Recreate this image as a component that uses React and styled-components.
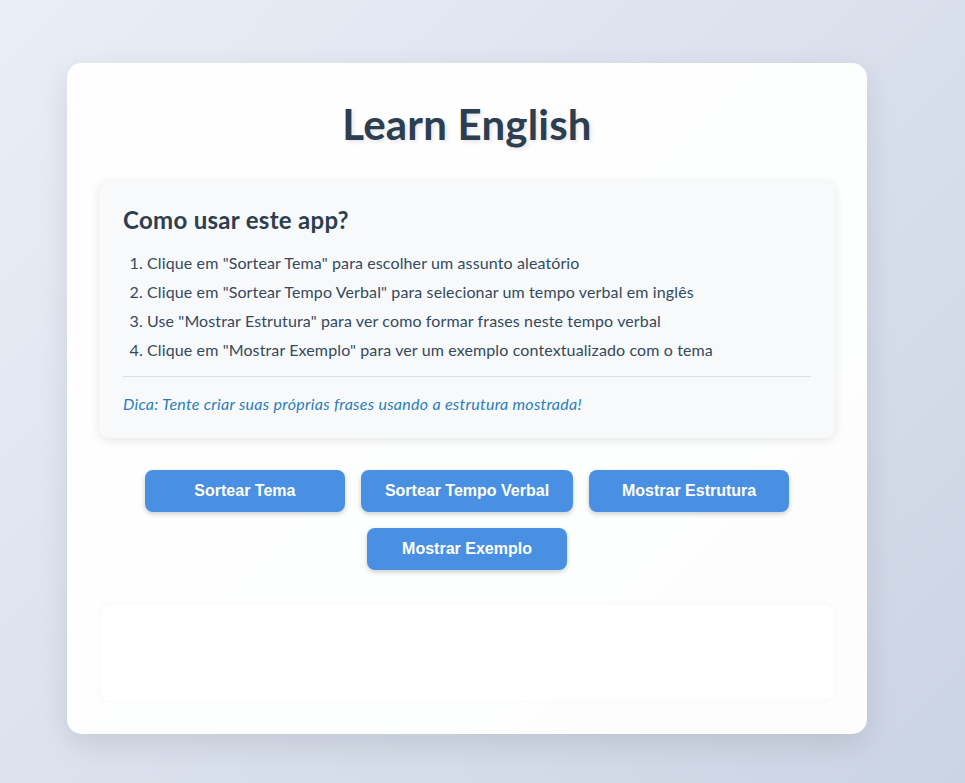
import React from 'react';
import styled, { createGlobalStyle } from 'styled-components';

const GlobalStyle = createGlobalStyle`
	html, body {
		margin: 0;
		padding: 0;
	}

	body {
		min-height: 100vh;
		background: linear-gradient(135deg, #eaeef6 0%, #cbd4e4 100%);
		font-family: "Segoe UI", Lato, "Noto Sans", sans-serif;
		color: #2c3e50;
	}
`;

const Page = styled.main`
	min-height: 100vh;
	box-sizing: border-box;
	padding: 63px 0 40px 67px;
`;

const Card = styled.section`
	width: 800px;
	box-sizing: border-box;
	padding: 32px;
	background: rgba(255, 255, 255, 0.95);
	border-radius: 15px;
	box-shadow: 0 10px 30px rgba(0, 0, 0, 0.1);
`;

const Title = styled.h1`
	margin: 0 0 32px;
	padding-top: 4px;
	text-align: center;
	font-size: 42px;
	line-height: 50px;
	font-weight: 700;
	letter-spacing: 0.2px;
	color: #2c3e50;
	text-shadow: 2px 2px 4px rgba(0, 0, 0, 0.1);
`;

const Instructions = styled.div`
	background: #f8f9fa;
	border-radius: 10px;
	padding: 24px 24px 22px;
	box-shadow: 0 2px 10px rgba(0, 0, 0, 0.1);
`;

const Subtitle = styled.h2`
	margin: 0 0 13px;
	font-size: 24px;
	line-height: 30px;
	font-weight: 700;
	letter-spacing: 0.3px;
	color: #2c3e50;
`;

const Steps = styled.ol`
	margin: 0;
	padding-left: 24px;
`;

const Step = styled.li`
	font-size: 16px;
	line-height: 29px;
	letter-spacing: 0.12px;
	color: #34495e;
`;

const Divider = styled.hr`
	border: 0;
	border-top: 1px solid #dcdfe3;
	margin: 12px 0 15px;
`;

const Tip = styled.p`
	margin: 0;
	font-size: 16px;
	line-height: 24px;
	letter-spacing: 0.28px;
	font-style: italic;
	color: #2980b9;
`;

const Actions = styled.div`
	display: flex;
	flex-wrap: wrap;
	justify-content: center;
	gap: 16px;
	margin: 32px 0 33px;
`;

const Button = styled.button`
	min-width: 200px;
	height: 42px;
	padding: 0 24px;
	border: 0;
	border-radius: 8px;
	background: #4a90e2;
	color: #fff;
	font-family: "Liberation Sans", Arial, sans-serif;
	font-size: 16px;
	font-weight: 700;
	box-shadow: 0 2px 5px rgba(0, 0, 0, 0.2);
	cursor: pointer;
`;

const Result = styled.div`
	min-height: 99px;
	background: #fff;
	border-radius: 10px;
	box-shadow: inset 0 0 4px rgba(0, 0, 0, 0.04), 0 0 3px rgba(0, 0, 0, 0.03);
`;

const steps = [
	'Clique em "Sortear Tema" para escolher um assunto aleatório',
	'Clique em "Sortear Tempo Verbal" para selecionar um tempo verbal em inglês',
	'Use "Mostrar Estrutura" para ver como formar frases neste tempo verbal',
	'Clique em "Mostrar Exemplo" para ver um exemplo contextualizado com o tema',
];

const actions = ['Sortear Tema', 'Sortear Tempo Verbal', 'Mostrar Estrutura', 'Mostrar Exemplo'];

const App = () => (
	<>
		<GlobalStyle />
		<Page>
			<Card>
				<Title>Learn English</Title>

				<Instructions>
					<Subtitle>Como usar este app?</Subtitle>
					<Steps>
						{steps.map((text) => <Step key={text}>{text}</Step>)}
					</Steps>
					<Divider />
					<Tip>Dica: Tente criar suas próprias frases usando a estrutura mostrada!</Tip>
				</Instructions>

				<Actions>
					{actions.map((label) => <Button key={label}>{label}</Button>)}
				</Actions>

				<Result />
			</Card>
		</Page>
	</>
);

export default App;
